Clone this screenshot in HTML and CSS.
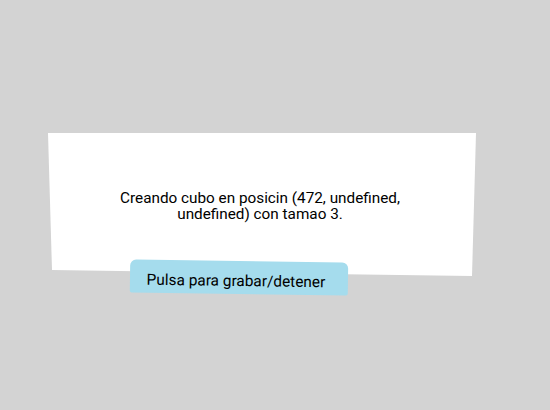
FILE: index.html
```html
<!DOCTYPE html>
<html lang="es">
<head>
<meta charset="utf-8">
<link rel="stylesheet" href="styles.css">
</head>
<body>
<main class="stage">
  <section class="card">
    <p class="message">Creando cubo en posicin (472, undefined, undefined) con tamao 3.</p>
  </section>
  <button class="record">Pulsa para grabar/detener</button>
</main>
</body>
</html>
```

FILE: styles.css
```css
html, body {
  margin: 0;
  padding: 0;
  background: #d3d3d3;
  width: 550px;
  height: 410px;
  overflow: hidden;
  font-family: Roboto, "Liberation Sans", sans-serif;
}

.stage {
  display: flex;
  flex-direction: column;
  align-items: flex-start;
  padding-top: 133px;
}

.card {
  margin-left: 48px;
  width: 428px;
  height: 143px;
  background: #ffffff;
  clip-path: polygon(0 0, 428px 0, 424px 143px, 4px 137px);
  display: flex;
  align-items: center;
  justify-content: center;
  box-sizing: border-box;
  padding: 3px 56px 0 52px;
}

.message {
  margin: 0;
  text-align: center;
  font-size: 15.3px;
  line-height: 16.5px;
  color: #000000;
}

.record {
  margin-top: -15px;
  margin-left: 130px;
  width: 218px;
  height: 33px;
  border: none;
  border-radius: 6px 6px 2px 2px;
  background: #a5dced;
  color: #000000;
  font-family: Roboto, "Liberation Sans", sans-serif;
  font-size: 15.4px;
  padding: 6px 6px 0 0;
  text-align: center;
  transform: rotate(0.8deg);
}
```
